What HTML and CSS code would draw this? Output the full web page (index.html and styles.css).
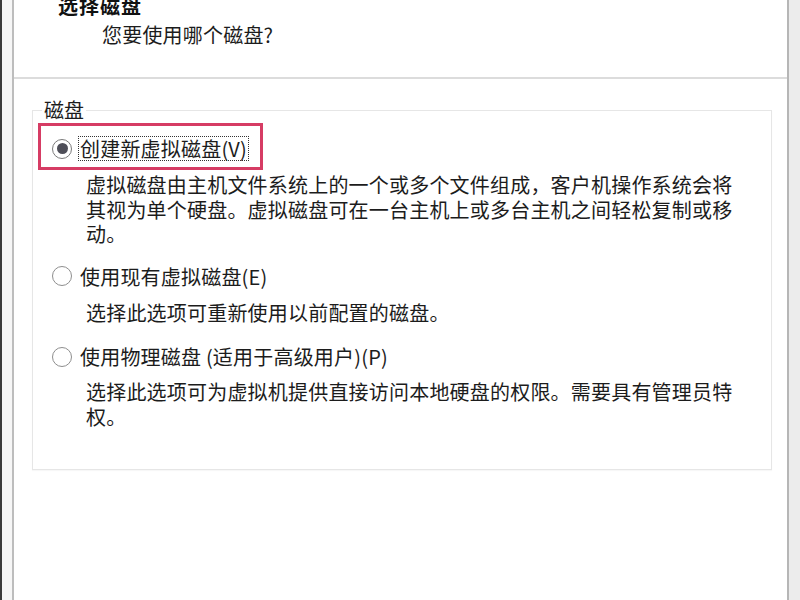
FILE: index.html
```html
<!DOCTYPE html>
<html lang="zh-CN">
<head>
<meta charset="utf-8">
<title>选择磁盘</title>
<link rel="stylesheet" href="styles.css">
</head>
<body>
<div class="screen">
  <div class="edge-dark"></div>
  <div class="edge-gap"></div>
  <div class="page">
    <header class="header">
      <div class="title">选择磁盘</div>
      <div class="subtitle">您要使用哪个磁盘?</div>
    </header>
    <fieldset class="group">
      <legend class="group-label">磁盘</legend>

      <div class="highlight">
        <span class="radio radio-checked"><span class="radio-dot"></span></span>
        <span class="option-label focused">创建新虚拟磁盘(V)</span>
      </div>
      <p class="desc desc-first">虚拟磁盘由主机文件系统上的一个或多个文件组成，客户机操作系统会将其视为单个硬盘。虚拟磁盘可在一台主机上或多台主机之间轻松复制或移动。</p>

      <div class="option option-second">
        <span class="radio"></span>
        <span class="option-label">使用现有虚拟磁盘(E)</span>
      </div>
      <p class="desc desc-second">选择此选项可重新使用以前配置的磁盘。</p>

      <div class="option option-third">
        <span class="radio"></span>
        <span class="option-label">使用物理磁盘 (适用于高级用户)(P)</span>
      </div>
      <p class="desc desc-third">选择此选项可为虚拟机提供直接访问本地硬盘的权限。需要具有管理员特权。</p>
    </fieldset>
  </div>
  <div class="edge-right"></div>
</div>
</body>
</html>
```

FILE: styles.css
```css
html, body {
  margin: 0;
  padding: 0;
  background: #ffffff;
}

body {
  font-family: "Noto Sans CJK SC", "Noto Sans", sans-serif;
  color: #1c1c1c;
  font-size: 20px;
}

.screen {
  display: flex;
  width: 800px;
  height: 600px;
  overflow: hidden;
}

.edge-dark {
  width: 2px;
  background: #3c3c3c;
}

.edge-gap {
  width: 10px;
  background: #f6f6f6;
}

.page {
  flex: 1;
  background: #ffffff;
  border-left: 2px solid #bdbdbd;
  border-right: 2px solid #b6b6b6;
  display: flex;
  flex-direction: column;
}

.edge-right {
  width: 11px;
  background: #ececec;
}

.header {
  height: 77px;
  border-bottom: 2px solid #dcdcdc;
  box-sizing: border-box;
  height: 79px;
}

.title {
  margin-top: -6px;
  padding-left: 44px;
  font-weight: bold;
  line-height: 24px;
  letter-spacing: 1px;
  color: #111;
}

.subtitle {
  margin-top: 5px;
  padding-left: 88px;
  line-height: 24px;
  letter-spacing: 0.2px;
}

.group {
  margin: 19px 15px 0 18px;
  padding: 0 0 40px 0;
  border: 1px solid #e6e6e6;
  box-shadow: 0 1px 1px rgba(0,0,0,0.03);
}

.group-label {
  margin-left: 9px;
  padding: 0 2px;
  line-height: 24px;
}

.highlight {
  display: inline-flex;
  align-items: center;
  gap: 6px;
  margin: 1px 0 0 5px;
  padding: 10px 11px 6px 11px;
  border: 3px solid #d63c64;
}

.option {
  display: flex;
  align-items: center;
  gap: 6px;
  padding-left: 19px;
}

.option-second {
  margin-top: 17px;
}

.option-third {
  margin-top: 19px;
}

.radio {
  width: 20px;
  height: 20px;
  box-sizing: border-box;
  border-radius: 50%;
  border: 1.5px solid #8e8e8e;
  background: #ffffff;
  display: flex;
  align-items: center;
  justify-content: center;
  flex: none;
}

.radio-checked {
  border-color: #7a7a7a;
}

.radio-dot {
  width: 11px;
  height: 11px;
  border-radius: 50%;
  background: #4e4e58;
}

.option-label {
  line-height: 21px;
  padding: 1px;
  border: 1px solid transparent;
  white-space: nowrap;
  letter-spacing: 0.2px;
}

.option-label.focused {
  border: 1px dotted #333333;
}

.desc {
  margin: 0;
  padding-left: 53px;
  width: 660px;
  line-height: 24.5px;
  letter-spacing: 0.2px;
}

.desc-first {
  margin-top: 3px;
}

.desc-second {
  margin-top: 12px;
}

.desc-third {
  margin-top: 11px;
}
```
